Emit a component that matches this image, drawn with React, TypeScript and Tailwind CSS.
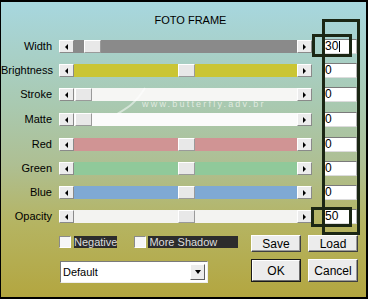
import React from 'react';

type Row = { label: string; track: string; thumb: number; value: string; mt: string; cursor?: boolean };

const rows: Row[] = [
  { label: 'Width', track: 'bg-[#8a8a8a]', thumb: 10, value: '30', mt: 'mt-0', cursor: true },
  { label: 'Brightness', track: 'bg-[#cac534]', thumb: 104, value: '0', mt: 'mt-[9px]' },
  { label: 'Stroke', track: 'bg-[#f6f6f4]', thumb: 1, value: '0', mt: 'mt-[9px]' },
  { label: 'Matte', track: 'bg-[#fbfbfb]', thumb: 1, value: '0', mt: 'mt-[10px]' },
  { label: 'Red', track: 'bg-[#d09494]', thumb: 104, value: '0', mt: 'mt-[10px]' },
  { label: 'Green', track: 'bg-[#90c99a]', thumb: 104, value: '0', mt: 'mt-[9px]' },
  { label: 'Blue', track: 'bg-[#7fa9d3]', thumb: 104, value: '0', mt: 'mt-[9px]' },
  { label: 'Opacity', track: 'bg-[#f3f3f1]', thumb: 104, value: '50', mt: 'mt-[9px]' },
];

function ArrowBtn({ dir }: { dir: 'left' | 'right' }) {
  return (
    <div className="w-[15px] h-[13px] bg-[#ececec] border border-t-white border-l-white border-b-[#8a8a8a] border-r-[#8a8a8a] flex items-center justify-center shrink-0">
      {dir === 'left' ? (
        <div className="w-0 h-0 border-y-[3px] border-y-transparent border-r-[3px] border-r-black" />
      ) : (
        <div className="w-0 h-0 border-y-[3px] border-y-transparent border-l-[3px] border-l-black" />
      )}
    </div>
  );
}

function SliderRow({ row }: { row: Row }) {
  return (
    <div className={`flex items-center h-[15px] ${row.mt}`}>
      <div className="w-[51px] text-right text-[11px] leading-[13px] text-black">{row.label}</div>
      <div className="ml-[7px]">
        <ArrowBtn dir="left" />
      </div>
      <div className={`relative w-[223px] h-[13px] ${row.track}`}>
        <div
          className="absolute top-0 w-[17px] h-[13px] bg-[#e8e8e8] border border-t-white border-l-white border-b-[#9a9a9a] border-r-[#9a9a9a]"
          style={{ left: row.thumb }}
        />
      </div>
      <ArrowBtn dir="right" />
      <div className="ml-[10px] w-[35px] h-[15px] bg-white border border-t-[#7a7a7a] border-l-[#7a7a7a] border-b-[#dcdcdc] border-r-[#b8b8b8] flex items-center pl-[2px] text-[12px] leading-[13px] text-black">
        {row.value}
        {row.cursor && <span className="w-px h-[11px] bg-black ml-px" />}
      </div>
    </div>
  );
}

function Checkbox() {
  return <div className="w-[12px] h-[12px] bg-[#f6f6f6] border border-t-[#8a8a8a] border-l-[#8a8a8a] border-b-white border-r-white shrink-0" />;
}

function Btn({ label, def }: { label: string; def?: boolean }) {
  if (def) {
    return (
      <div className="w-[50px] h-[23px] border border-[#1a1a1a]">
        <div className="w-full h-full bg-[#ececec] border border-t-white border-l-white border-b-[#6a6a6a] border-r-[#6a6a6a] flex items-center justify-center text-[12px] text-black">
          {label}
        </div>
      </div>
    );
  }
  return (
    <div className="w-full h-full bg-[#ececec] border border-t-white border-l-white border-b-[#404040] border-r-[#404040] shadow-[inset_-1px_-1px_#9a9a9a] flex items-center justify-center text-[12px] text-black">
      {label}
    </div>
  );
}

export default function App() {
  return (
    <div className="w-[368px] h-[299px] border-t-2 border-r-2 border-b-2 border-l border-black bg-[linear-gradient(to_bottom,#a7d7df_0%,#a9c9b0_35%,#aebf93_55%,#b5b462_75%,#b3a640_100%)] font-['Liberation_Sans',Arial,sans-serif] overflow-hidden">
      <div className="relative w-full h-full flex flex-col">
        <div className="pt-[12px] pl-[14px] h-[25px] text-center text-[11px] leading-[13px] text-black">FOTO FRAME</div>

        <div className="mt-[12px] flex flex-col">
          {rows.map((r) => (
            <SliderRow key={r.label} row={r} />
          ))}
        </div>

        <div className="mt-[11px] flex">
          <div className="ml-[58px] w-[192px] flex flex-col">
            <div className="mt-[1px] h-[12px] flex items-center text-[11px] leading-[12px]">
              <Checkbox />
              <span className="ml-[3px] h-[12px] bg-[#2c2c2c] text-[#dcdcdc] px-0">Negative</span>
              <div className="ml-[17px]">
                <Checkbox />
              </div>
              <span className="ml-[2px] w-[90px] h-[12px] bg-[#2c2c2c] text-[#dcdcdc] pl-[1px]">More Shadow</span>
            </div>
            <div className="mt-[13px] ml-[1px] w-[148px] h-[22px] bg-white border border-t-[#7a7a7a] border-l-[#7a7a7a] border-b-[#eeeeee] border-r-[#eeeeee] flex items-center justify-between">
              <span className="pl-[2px] text-[11px] text-black">Default</span>
              <div className="mr-[2px] w-[15px] h-[16px] bg-[#ececec] border border-t-white border-l-white border-b-[#606060] border-r-[#606060] flex items-center justify-center">
                <div className="w-0 h-0 border-x-[3px] border-x-transparent border-t-[4px] border-t-black" />
              </div>
            </div>
          </div>
          <div className="grid grid-cols-[50px_50px] grid-rows-[17px_23px] gap-x-[7px] gap-y-[7px]">
            <Btn label="Save" />
            <Btn label="Load" />
            <Btn label="OK" def />
            <Btn label="Cancel" />
          </div>
        </div>

        {/* watermark */}
        <svg className="absolute left-[112px] top-[84px] pointer-events-none" width="40" height="30" viewBox="0 0 40 30">
          <path d="M4 28 C 14 22, 22 18, 32 2" stroke="#ffffff" strokeOpacity="0.5" strokeWidth="2" fill="none" />
        </svg>
        <div className="absolute left-[141px] top-[97px] text-[9px] leading-[10px] tracking-[2.2px] text-[#f4f6f0]/75 pointer-events-none">
          www.butterfly.adv.br
        </div>

        {/* annotation boxes */}
        <div className="absolute left-[321px] top-[17px] w-[38px] h-[216px] border-[3px] border-[#1b2614] pointer-events-none" />
        <div className="absolute left-[311px] top-[32px] w-[40px] h-[23px] border-[3px] border-[#1b2614] pointer-events-none" />
        <div className="absolute left-[310px] top-[205px] w-[41px] h-[20px] border-[3px] border-[#1b2614] pointer-events-none" />
      </div>
    </div>
  );
}
